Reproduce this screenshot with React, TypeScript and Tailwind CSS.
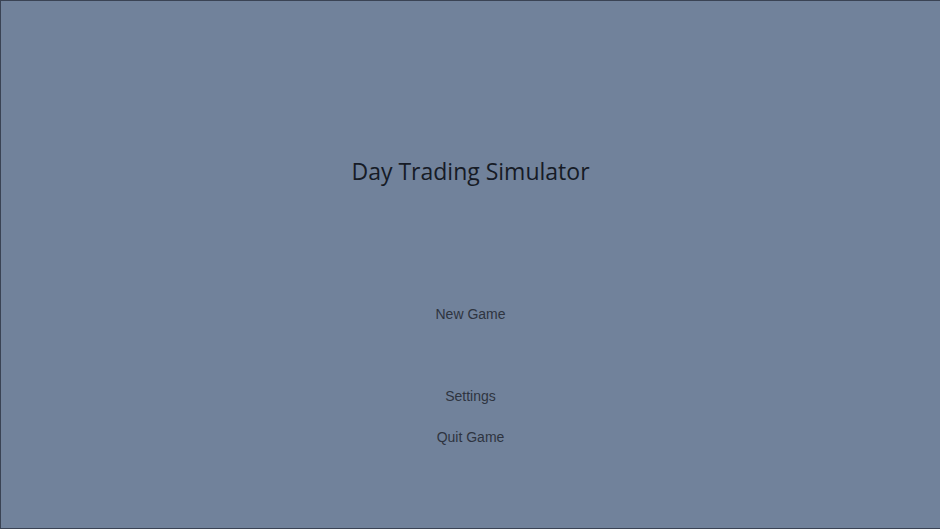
export default function App() {
  const items = ["New Game", "Settings", "Quit Game"];
  return (
    <div className="flex h-[529px] w-[940px] flex-col items-center border-t border-l border-b border-[#3a4354] bg-[#71829b] font-['Liberation_Sans',Arial,sans-serif]">
      <h1 className="mt-[154px] text-[23px] leading-[32px] font-normal text-[#161b26] font-['Open_Sans','Noto_Sans',sans-serif]">
        Day Trading Simulator
      </h1>
      <nav className="mt-[117px] flex flex-col items-center">
        <button className="h-[20px] text-[14px] leading-[20px] text-[#2e3440]">{items[0]}</button>
        <button className="mt-[62px] h-[20px] text-[14px] leading-[20px] text-[#2e3440]">{items[1]}</button>
        <button className="mt-[21px] h-[20px] text-[14px] leading-[20px] text-[#2e3440]">{items[2]}</button>
      </nav>
    </div>
  );
}
